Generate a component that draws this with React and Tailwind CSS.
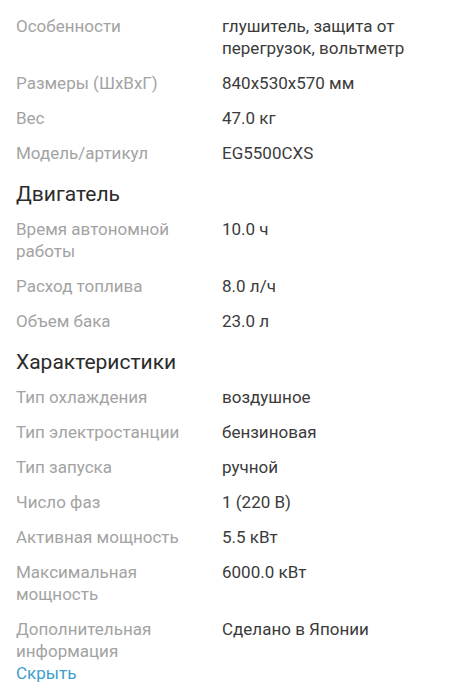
import React from 'react';

const sections = [
  {
    title: null,
    rows: [
      ['Производитель', 'Denyo'],
      ['Особенности', 'глушитель, защита от перегрузок, вольтметр'],
      ['Размеры (ШхВхГ)', '840x530x570 мм'],
      ['Вес', '47.0 кг'],
      ['Модель/артикул', 'EG5500CXS'],
    ],
  },
  {
    title: 'Двигатель',
    rows: [
      ['Время автономной работы', '10.0 ч'],
      ['Расход топлива', '8.0 л/ч'],
      ['Объем бака', '23.0 л'],
    ],
  },
  {
    title: 'Характеристики',
    rows: [
      ['Тип охлаждения', 'воздушное'],
      ['Тип электростанции', 'бензиновая'],
      ['Тип запуска', 'ручной'],
      ['Число фаз', '1 (220 В)'],
      ['Активная мощность', '5.5 кВт'],
      ['Максимальная мощность', '6000.0 кВт'],
      ['Дополнительная информация', 'Сделано в Японии'],
    ],
  },
];

function SpecRow({ label, value }) {
  return (
    <div className="grid grid-cols-[206px_1fr]">
      <div className="pr-3 text-[#a3a3a3]">{label}</div>
      <div className="text-[#3b3b3b]">{value}</div>
    </div>
  );
}

export default function App() {
  return (
    <div
      className="w-[466px] h-[699px] overflow-hidden bg-white"
      style={{ fontFamily: 'Roboto, "Noto Sans", sans-serif' }}
    >
      <div className="-mt-[20px] px-4 text-[17px] leading-[22px]">
        {sections.map((section, i) => (
          <div key={i}>
            {section.title && (
              <h2 className="mt-[17px] mb-[11px] text-[21px] leading-[26px] text-[#2b2b2b]">
                {section.title}
              </h2>
            )}
            <div className="flex flex-col gap-[13px]">
              {section.rows.map(([label, value]) => (
                <SpecRow key={label} label={label} value={value} />
              ))}
            </div>
          </div>
        ))}
        <button className="block text-[#3c9ecb] leading-[22px]">Скрыть</button>
      </div>
    </div>
  );
}
